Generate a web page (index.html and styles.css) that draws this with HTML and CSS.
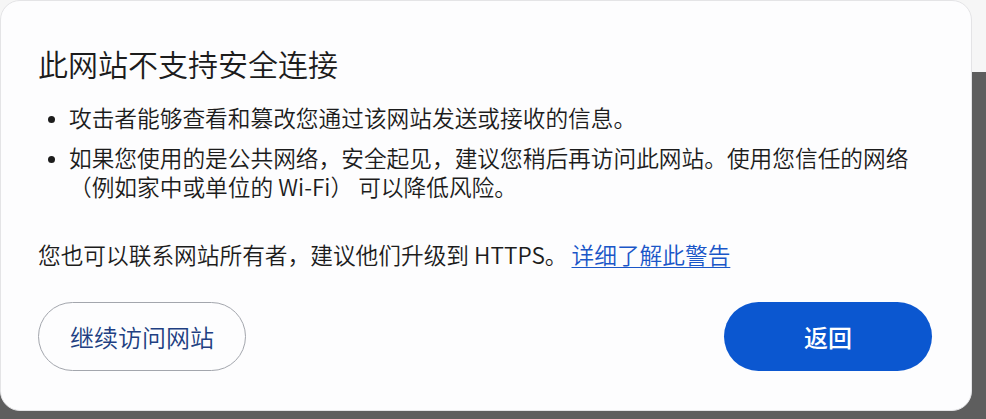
FILE: index.html
```html
<!DOCTYPE html>
<html lang="zh-CN">
<head>
<meta charset="utf-8">
<title>此网站不支持安全连接</title>
<link rel="stylesheet" href="styles.css">
</head>
<body>
  <div class="dialog">
    <h1 class="title">此网站不支持安全连接</h1>
    <ul class="reasons">
      <li>攻击者能够查看和篡改您通过该网站发送或接收的信息。</li>
      <li>如果您使用的是公共网络，安全起见，建议您稍后再访问此网站。使用您信任的网络（例如家中或单位的 Wi-Fi）&nbsp;可以降低风险。</li>
    </ul>
    <p class="note">您也可以联系网站所有者，建议他们升级到 HTTPS。<a class="learn" href="#">详细了解此警告</a></p>
    <div class="actions">
      <button class="btn btn-outline" type="button">继续访问网站</button>
      <button class="btn btn-primary" type="button">返回</button>
    </div>
  </div>
</body>
</html>
```
FILE: styles.css
```css
html, body {
  margin: 0;
  padding: 0;
}

body {
  width: 986px;
  height: 419px;
  overflow: hidden;
  background: linear-gradient(to bottom, #f6f6f6 0, #f6f6f6 72px, #5e5e5e 72px, #5e5e5e 100%);
  font-family: "Noto Sans CJK SC", "Noto Sans", sans-serif;
  font-weight: 350;
  color: #1c1c1c;
}

.dialog {
  box-sizing: border-box;
  width: 972px;
  height: 411px;
  background: #fdfdfe;
  border: 1px solid #e4e4e6;
  border-radius: 20px;
  padding: 42px 39px 0 37px;
  display: flex;
  flex-direction: column;
}

.title {
  margin: 0;
  font-size: 30px;
  font-weight: 350;
  line-height: 40px;
  color: #1c1c1c;
}

.reasons {
  margin: 20px 0 0 0;
  padding: 0 0 0 31px;
  font-size: 22.7px;
  line-height: 29px;
}

.reasons li + li {
  margin-top: 11px;
}

.reasons li::marker {
  font-size: 18px;
}

.note {
  margin: 39px 0 0 0;
  font-size: 22.7px;
  line-height: 29px;
}

.learn {
  margin-left: 4px;
  color: #1a56c8;
  text-decoration: underline;
  text-underline-offset: 3px;
  text-decoration-thickness: 1px;
}

.actions {
  margin-top: 33px;
  display: flex;
  justify-content: space-between;
}

.btn {
  box-sizing: border-box;
  width: 208px;
  height: 69px;
  border-radius: 35px;
  font-family: "Noto Sans CJK SC", "Noto Sans", sans-serif;
  font-size: 24px;
  font-weight: 350;
  line-height: 1;
  padding: 0;
  cursor: pointer;
}

.btn-outline {
  background: #fdfdfe;
  border: 1px solid #a3a6ad;
  color: #213f82;
}

.btn-primary {
  background: #0b57d0;
  border: none;
  color: #ffffff;
  font-weight: 500;
}
```
